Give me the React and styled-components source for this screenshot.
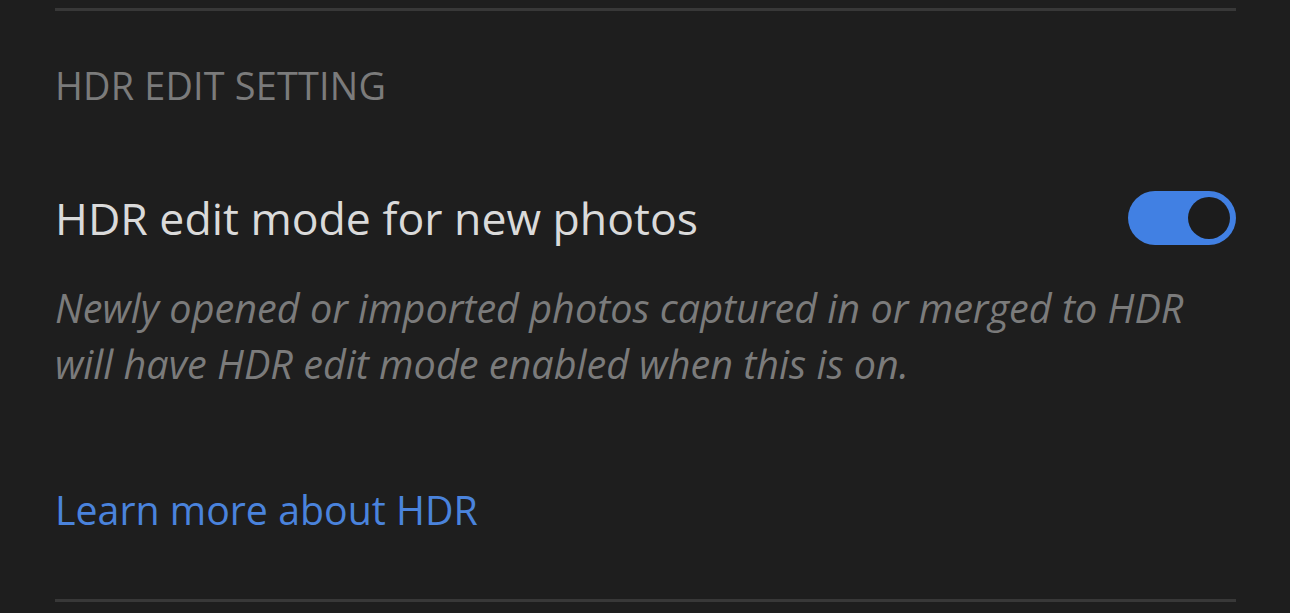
import React from 'react'
import styled, { createGlobalStyle } from 'styled-components'

const Global = createGlobalStyle`
    html, body {
        margin:0;
        background:#1e1e1e;
    }
    body {
        font-family:"Open Sans", "Noto Sans", sans-serif;
    }
`
const Pagina = styled.div`
    height:613px;
    padding:0 54px 0 55px;
    box-sizing:border-box;
    background:#1e1e1e;
    display:flex;
    flex-direction:column;
`
const Divisor = styled.div`
    height:3px;
    background:#383838;
    margin-top:${p => p.topo}px;
`
const Titulo = styled.div`
    margin-top:53px;
    font-size:37.8px;
    line-height:44px;
    color:#7b7b7b;
    letter-spacing:0.2px;
`
const Linha = styled.div`
    margin-top:82px;
    display:flex;
    align-items:center;
    justify-content:space-between;
`
const Rotulo = styled.div`
    font-size:44.6px;
    line-height:56px;
    color:#dadada;
`
const Chave = styled.div`
    width:108px;
    height:54px;
    border-radius:27px;
    background:#4180e3;
    display:flex;
    align-items:center;
    justify-content:flex-end;
    padding:0 6px;
    box-sizing:border-box;
`
const Bolinha = styled.div`
    width:42px;
    height:42px;
    border-radius:50%;
    background:#1c1c1c;
`
const Descricao = styled.div`
    margin-top:34px;
    font-size:39.6px;
    line-height:56px;
    font-style:italic;
    color:#7b7b7b;
    white-space:nowrap;
`
const Link = styled.a`
    margin-top:94px;
    font-size:39.3px;
    line-height:48px;
    color:#4a83dc;
    text-decoration:none;
`

export default function App(){
    return(
        <Pagina>
            <Global/>
            <Divisor topo={8}/>
            <Titulo>HDR EDIT SETTING</Titulo>
            <Linha>
                <Rotulo>HDR edit mode for new photos</Rotulo>
                <Chave><Bolinha/></Chave>
            </Linha>
            <Descricao>
                Newly opened or imported photos captured in or merged to HDR<br/>
                will have HDR edit mode enabled when this is on.
            </Descricao>
            <Link href="#">Learn more about HDR</Link>
            <Divisor topo={65}/>
        </Pagina>
    )
}
